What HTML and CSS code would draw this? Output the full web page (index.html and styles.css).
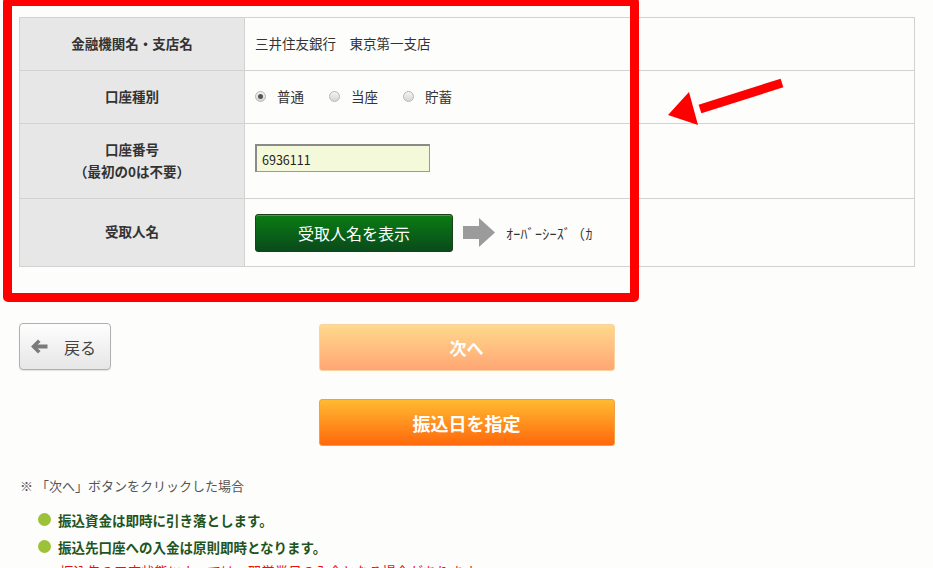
FILE: index.html
```html
<!DOCTYPE html>
<html lang="ja">
<head>
    <meta charset="UTF-8">
    <title>振込先口座の入力</title>
    <link rel="stylesheet" href="styles.css">
</head>
<body>
    <div class="page">
        <!-- 振込先口座 -->
        <table class="account-table">
            <tr class="row-bank">
                <th>金融機関名・支店名</th>
                <td>三井住友銀行　東京第一支店</td>
            </tr>
            <tr class="row-type">
                <th>口座種別</th>
                <td>
                    <div class="radios">
                        <label class="radio"><span class="dot checked"></span>普通</label>
                        <label class="radio"><span class="dot"></span>当座</label>
                        <label class="radio"><span class="dot"></span>貯蓄</label>
                    </div>
                </td>
            </tr>
            <tr class="row-number">
                <th>口座番号<br>（最初の0は不要）</th>
                <td><input type="text" class="num-input" value="6936111"></td>
            </tr>
            <tr class="row-name">
                <th>受取人名</th>
                <td>
                    <div class="payee">
                        <button class="show-btn">受取人名を表示</button>
                        <svg class="gray-arrow" width="32" height="30" viewBox="0 0 32 30">
                            <path d="M0 8 H16 V0 L32 14.5 L16 29 V21 H0 Z" fill="#9b9b9b"/>
                        </svg>
                        <span class="payee-name">ｵｰﾊﾞｰｼｰｽﾞ（ｶ</span>
                    </div>
                </td>
            </tr>
        </table>

        <div class="actions">
            <button class="back-btn">
                <svg width="17" height="15" viewBox="0 0 17 15">
                    <path d="M0 7.5 L7 0.5 L9.6 3.1 L6.6 5.6 H16.5 V9.4 H6.6 L9.6 11.9 L7 14.5 Z" fill="#7a7a7a"/>
                </svg>
                戻る
            </button>
            <button class="next-btn">次へ</button>
            <button class="date-btn">振込日を指定</button>
        </div>

        <div class="notes">
            <p class="note-head">※ 「次へ」ボタンをクリックした場合</p>
            <ul class="note-list">
                <li>振込資金は即時に引き落とします。</li>
                <li>振込先口座への入金は原則即時となります。</li>
            </ul>
            <p class="note-warn">振込先の口座状態によっては、翌営業日の入金となる場合があります。</p>
        </div>

        <!-- 注釈の枠と矢印 -->
        <div class="mark-frame"></div>
        <svg class="mark-arrow" width="130" height="60" viewBox="0 0 130 60">
            <path d="M122 11 L40 37" stroke="#ff0000" stroke-width="9"/>
            <path d="M8 43 L29 20 L38 53 Z" fill="#ff0000"/>
        </svg>
    </div>
</body>
</html>
```

FILE: styles.css
```css
html, body {
    margin: 0;
    padding: 0;
    background-color: #fdfdfb;
}
body {
    font-family: "Noto Sans CJK JP", "Liberation Sans", sans-serif;
    color: #333;
    font-size: 13.5px;
}
.page {
    position: relative;
    width: 895px;
    padding: 17px 0 0 19px;
}
.account-table {
    width: 896px;
    border-collapse: collapse;
}
.account-table th,
.account-table td {
    border: 1px solid #d2d2d2;
    padding: 0 0 2px 10px;
}
.account-table th {
    width: 214px;
    background-color: #e7e7e7;
    font-weight: bold;
    text-align: center;
    padding: 0 5px 3px;
    line-height: 22px;
}
.account-table td {
    background-color: #fdfdfc;
}
.row-bank { height: 53px; }
.row-type { height: 53px; }
.row-number { height: 75px; }
.row-name { height: 68px; }

.radios {
    display: flex;
    gap: 25px;
    align-items: center;
}
.radio {
    display: flex;
    align-items: center;
    gap: 11px;
}
.dot {
    width: 11px;
    height: 11px;
    border-radius: 50%;
    border: 1px solid #b8b8b8;
    background: linear-gradient(#f4f4f4, #d6d6d6);
    box-sizing: border-box;
    display: flex;
    align-items: center;
    justify-content: center;
}
.dot.checked::after {
    content: "";
    width: 5px;
    height: 5px;
    border-radius: 50%;
    background-color: #555;
}

.num-input {
    display: block;
    width: 175px;
    height: 28px;
    box-sizing: border-box;
    margin: -4px 0 0;
    padding: 2px 5px 0;
    background-color: #f4fad9;
    border: 1px solid #9a9a9a;
    border-top: 2px solid #8a8a8a;
    border-left: 2px solid #8a8a8a;
    font-family: "Noto Sans CJK JP", sans-serif;
    font-size: 12.5px;
    color: #222;
}

.payee {
    display: flex;
    align-items: center;
    margin-top: 2px;
}
.show-btn {
    width: 198px;
    height: 38px;
    margin: 0;
    border: 1px solid #1d3f1d;
    border-radius: 3px;
    background: linear-gradient(#0a7d12, #0a4a1c);
    color: #fff;
    font-family: "Noto Sans CJK JP", sans-serif;
    font-size: 16px;
    box-shadow: inset 0 1px 0 rgba(255, 255, 255, 0.25);
}
.gray-arrow {
    margin-left: 10px;
}
.payee-name {
    margin-left: 11px;
    font-size: 14px;
    letter-spacing: 0.3px;
    color: #333;
}

.actions {
    display: grid;
    grid-template-columns: 1fr 296px 1fr;
    row-gap: 28px;
    margin-top: 56px;
}
.back-btn {
    grid-column: 1;
    grid-row: 1;
    justify-self: start;
    width: 92px;
    height: 47px;
    display: flex;
    align-items: center;
    gap: 16px;
    padding: 0 0 0 11px;
    border: 1px solid #b0b0b0;
    border-radius: 4px;
    background: linear-gradient(#fefefe, #e6e6e6);
    color: #444;
    font-family: "Noto Sans CJK JP", sans-serif;
    font-size: 16px;
    box-shadow: 0 1px 1px rgba(0, 0, 0, 0.1);
}
.next-btn,
.date-btn {
    grid-column: 2;
    height: 47px;
    border-radius: 3px;
    color: #fff;
    font-family: "Noto Sans CJK JP", sans-serif;
    font-weight: bold;
    font-size: 17px;
}
.next-btn {
    grid-row: 1;
    margin-top: 1px;
    border: 1px solid #f9d2a0;
    background: linear-gradient(#ffd98c, #ffa674);
}
.date-btn {
    grid-row: 2;
    border: 1px solid #f0a040;
    background: linear-gradient(#ffba32, #ff680c);
    font-size: 18px;
}

.notes {
    margin-top: 28px;
}
.note-head {
    margin: 0 0 8px 1px;
    color: #555;
    font-size: 13px;
    line-height: 24px;
}
.note-list {
    list-style: none;
    margin: 0;
    padding: 0 0 0 19px;
}
.note-list li {
    display: flex;
    align-items: center;
    gap: 7px;
    height: 27px;
    color: #1e551e;
    font-weight: bold;
    font-size: 13.5px;
}
.note-list li::before {
    content: "";
    width: 13px;
    height: 13px;
    border-radius: 50%;
    background-color: #9cc23a;
}
.note-warn {
    margin: -2px 0 0 41px;
    color: #e81010;
    font-size: 13.5px;
    line-height: 27px;
}

.mark-frame {
    position: absolute;
    left: 3px;
    top: -3px;
    width: 618px;
    height: 287px;
    border: 9px solid #ff0000;
    border-radius: 5px;
}
.mark-arrow {
    position: absolute;
    left: 660px;
    top: 72px;
}
```
